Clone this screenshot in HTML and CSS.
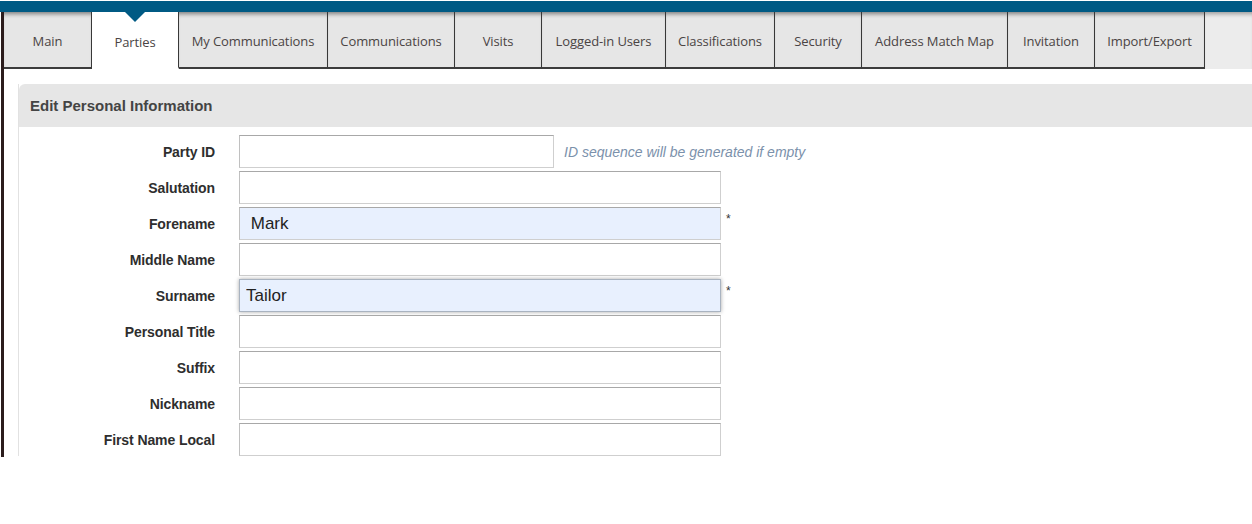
FILE: index.html
```html
<!DOCTYPE html>
<html>
<head>
<meta charset="utf-8">
<link rel="stylesheet" href="styles.css">
</head>
<body>
<div class="topbar"></div>
<div class="shell">
  <nav class="tabs">
    <div class="tab">Main</div>
    <div class="tab active">Parties</div>
    <div class="tab">My Communications</div>
    <div class="tab">Communications</div>
    <div class="tab">Visits</div>
    <div class="tab">Logged-in Users</div>
    <div class="tab">Classifications</div>
    <div class="tab">Security</div>
    <div class="tab">Address Match Map</div>
    <div class="tab">Invitation</div>
    <div class="tab">Import/Export</div>
    <div class="tab-fill"></div>
  </nav>
  <section class="panel">
    <h2 class="panel-head">Edit Personal Information</h2>
    <form class="form">
      <div class="row"><label class="lbl">Party ID</label><input class="inp short" type="text"><span class="hint">ID sequence will be generated if empty</span></div>
      <div class="row"><label class="lbl">Salutation</label><input class="inp" type="text"></div>
      <div class="row"><label class="lbl">Forename</label><input class="inp filled" type="text" value=" Mark"><span class="req">*</span></div>
      <div class="row"><label class="lbl">Middle Name</label><input class="inp" type="text"></div>
      <div class="row"><label class="lbl">Surname</label><input class="inp filled focus" type="text" value="Tailor"><span class="req">*</span></div>
      <div class="row"><label class="lbl">Personal Title</label><input class="inp" type="text"></div>
      <div class="row"><label class="lbl">Suffix</label><input class="inp" type="text"></div>
      <div class="row"><label class="lbl">Nickname</label><input class="inp" type="text"></div>
      <div class="row"><label class="lbl">First Name Local</label><input class="inp" type="text"></div>
    </form>
  </section>
</div>
</body>
</html>
```
FILE: styles.css
```css
html, body {
  margin: 0;
  padding: 0;
  background: #fff;
}
body {
  font-family: "Liberation Sans", Arial, sans-serif;
  padding-top: 1px;
}
.topbar {
  height: 11px;
  background: #005a84;
}
.shell {
  margin-left: 1px;
  border-left: 3px solid #2b1c1c;
  height: 445px;
  overflow: hidden;
  background: #fff;
}
.tabs {
  display: grid;
  grid-template-columns: 88px 87px 149px 127px 87px 124px 109px 87px 146px 87px 110px 1fr;
  height: 57px;
}
.tab {
  position: relative;
  display: flex;
  align-items: center;
  justify-content: center;
  padding-top: 3px;
  background: #e6e6e6;
  border-right: 1px solid #383838;
  border-bottom: 2px solid #3c3c3c;
  box-shadow: inset 0 5px 4px -3px rgba(0, 0, 0, 0.45);
  font-family: "Open Sans", "Noto Sans", sans-serif;
  font-size: 13px;
  font-weight: 500;
  color: #4a4444;
  white-space: nowrap;
  letter-spacing: -0.1px;
}
.tab.active {
  background: #fff;
  border-bottom-color: transparent;
  box-shadow: none;
  padding-top: 5px;
}
.tab.active::before {
  content: "";
  position: absolute;
  top: 0;
  left: 50%;
  margin-left: -10px;
  border-left: 10px solid transparent;
  border-right: 10px solid transparent;
  border-top: 10px solid #005a84;
}
.tab-fill {
  background: #ececec;
  box-shadow: inset 0 5px 4px -3px rgba(0, 0, 0, 0.35);
}
.panel {
  margin: 15px 0 0 14px;
  border-left: 1px solid #e2e2e2;
}
.panel-head {
  margin: 0;
  height: 43px;
  display: flex;
  align-items: center;
  padding-left: 11px;
  background: #e6e6e6;
  border-top-left-radius: 6px;
  font-size: 15px;
  font-weight: bold;
  color: #444;
}
.form {
  display: flex;
  flex-direction: column;
  gap: 3px;
  padding-top: 8px;
}
.row {
  display: flex;
  align-items: center;
  height: 33px;
}
.lbl {
  width: 196px;
  margin-right: 24px;
  text-align: right;
  font-size: 14px;
  font-weight: bold;
  color: #2e2e2e;
  letter-spacing: -0.1px;
}
.inp {
  box-sizing: border-box;
  width: 482px;
  height: 33px;
  margin: 0;
  padding: 0 6px;
  border: 1px solid #cfcfcf;
  border-top-color: #a8a8a8;
  border-left-color: #c0c0c0;
  background: #fff;
  font-family: "Liberation Sans", Arial, sans-serif;
  font-size: 17px;
  color: #222;
  outline: none;
}
.inp.short {
  width: 315px;
}
.inp.filled {
  background: #e8f0fe;
}
.inp.focus {
  border-color: #a9b3c0;
  box-shadow: 0 0 4px rgba(0, 0, 0, 0.35);
}
.hint {
  margin-left: 10px;
  font-size: 14px;
  font-style: italic;
  color: #7b91ab;
}
.req {
  align-self: flex-start;
  margin-left: 5px;
  margin-top: 5px;
  font-size: 12px;
  color: #333;
}
```
